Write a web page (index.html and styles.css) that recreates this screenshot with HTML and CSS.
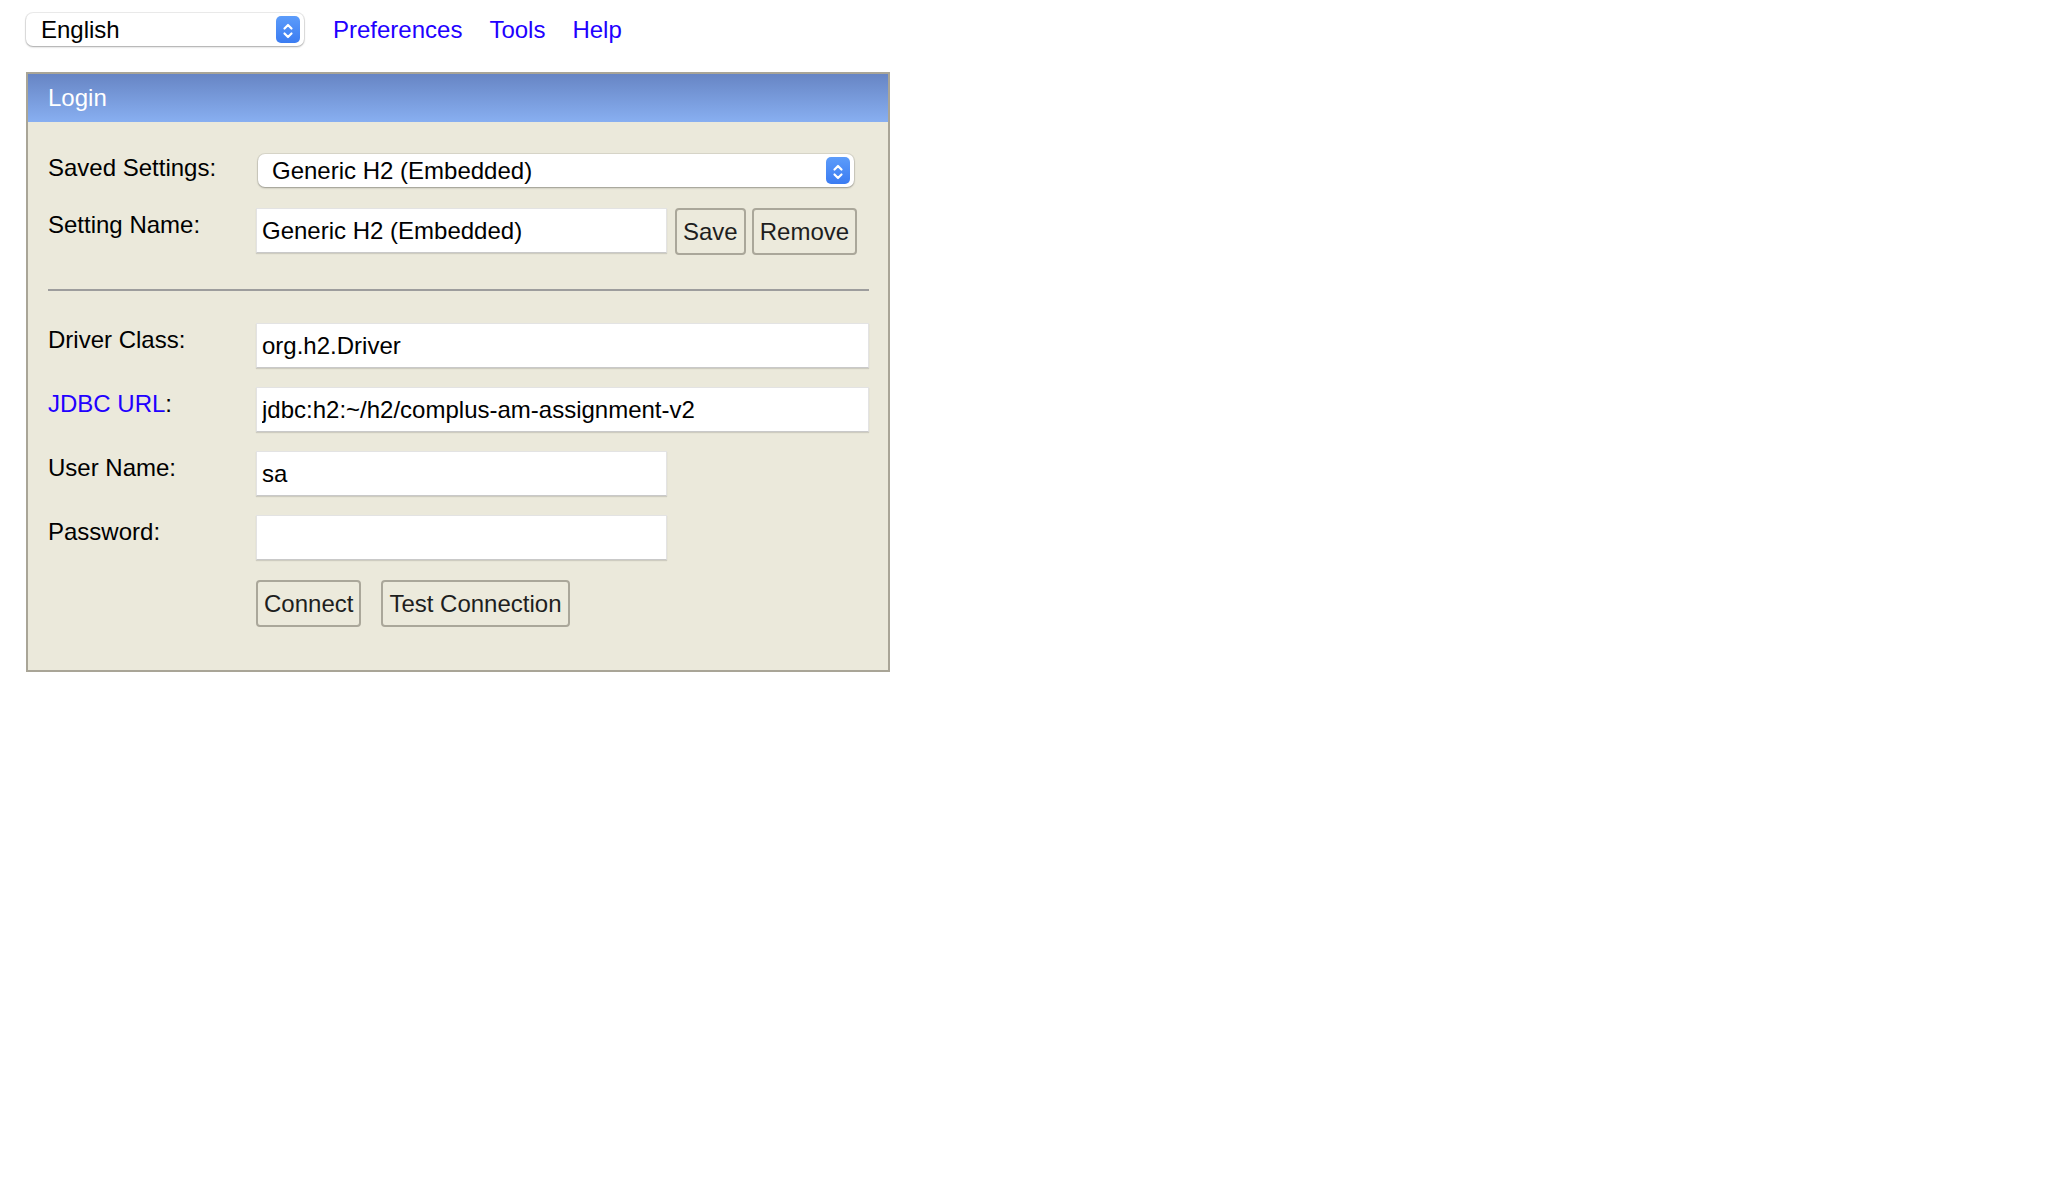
FILE: index.html
```html
<!DOCTYPE html>
<html lang="en">
<head>
  <meta charset="UTF-8" />
  <title>H2 Console</title>
  <link rel="stylesheet" href="styles.css">
</head>
<body>
  <div class="topbar">
    <div class="select lang">
      <span class="select-text">English</span>
      <svg class="stepper" width="24" height="27" viewBox="0 0 24 27">
        <defs>
          <linearGradient id="stepA" x1="0" y1="0" x2="0" y2="1">
            <stop offset="0" stop-color="#5c9cfa"/>
            <stop offset="1" stop-color="#3b7cf2"/>
          </linearGradient>
        </defs>
        <rect x="0" y="0" width="24" height="27" rx="5" fill="url(#stepA)"/>
        <path d="M8.5 12.5 L12 9 L15.5 12.5 M8.5 17.5 L12 21 L15.5 17.5" fill="none" stroke="#fff" stroke-width="2.2" stroke-linecap="round" stroke-linejoin="round"/>
      </svg>
    </div>
    <nav class="menu">
      <a href="#">Preferences</a>
      <a href="#">Tools</a>
      <a href="#">Help</a>
    </nav>
  </div>

  <div class="login">
    <div class="login-title">Login</div>
    <div class="login-body">
      <div class="row">
        <label class="label flush">Saved Settings:</label>
        <div class="select saved">
          <span class="select-text">Generic H2 (Embedded)</span>
          <svg class="stepper" width="24" height="27" viewBox="0 0 24 27">
            <defs>
              <linearGradient id="stepB" x1="0" y1="0" x2="0" y2="1">
                <stop offset="0" stop-color="#5c9cfa"/>
                <stop offset="1" stop-color="#3b7cf2"/>
              </linearGradient>
            </defs>
            <rect x="0" y="0" width="24" height="27" rx="5" fill="url(#stepB)"/>
            <path d="M8.5 12.5 L12 9 L15.5 12.5 M8.5 17.5 L12 21 L15.5 17.5" fill="none" stroke="#fff" stroke-width="2.2" stroke-linecap="round" stroke-linejoin="round"/>
          </svg>
        </div>
      </div>
      <div class="row name-row">
        <label class="label">Setting Name:</label>
        <div class="group">
          <input class="text short" type="text" value="Generic H2 (Embedded)">
          <button class="btn">Save</button>
          <button class="btn">Remove</button>
        </div>
      </div>

      <hr class="sep">

      <div class="row">
        <label class="label">Driver Class:</label>
        <input class="text long" type="text" value="org.h2.Driver">
      </div>
      <div class="row">
        <label class="label"><a href="#">JDBC URL</a>:</label>
        <input class="text long" type="text" value="jdbc:h2:~/h2/complus-am-assignment-v2">
      </div>
      <div class="row">
        <label class="label">User Name:</label>
        <input class="text short" type="text" value="sa">
      </div>
      <div class="row">
        <label class="label">Password:</label>
        <input class="text short" type="password" value="">
      </div>
      <div class="row actions">
        <button class="btn">Connect</button>
        <button class="btn">Test Connection</button>
      </div>
    </div>
  </div>
</body>
</html>
```

FILE: styles.css
```css
body { margin: 0; background: #fff; font-family: "Liberation Sans", Arial, sans-serif; font-size: 24px; line-height: 28px; color: #000; }
a { color: #2200ff; text-decoration: none; }

.topbar { display: flex; align-items: center; padding: 13px 0 0 26px; }
.menu { display: flex; gap: 27px; margin-left: 29px; }

.select { display: flex; align-items: center; justify-content: space-between; box-sizing: border-box; height: 33px; background: #fff; border-radius: 7px; box-shadow: 0 0 0 1px rgba(0,0,0,0.07), 0 1px 2px rgba(0,0,0,0.3); padding: 0 4px 0 15px; }
.select .select-text { white-space: nowrap; }
.select .stepper { display: block; flex: none; }
.select.lang { width: 278px; }
.select.saved { width: 596px; margin-left: 2px; padding-left: 14px; }

.login { box-sizing: border-box; width: 864px; margin: 26px 0 0 26px; border: 2px solid #a9a597; background: #ebe9db; }
.login-title { height: 48px; display: flex; align-items: center; padding-left: 20px; color: #fff; background: linear-gradient(#6785c4, #88aff1); }
.login-body { padding: 32px 19px 43px 20px; }

.row { display: flex; align-items: flex-start; margin-bottom: 19px; }
.row:first-child { margin-bottom: 21px; }
.label { flex: none; width: 208px; padding-top: 3px; }
.label.flush { padding-top: 0; }
.group { display: flex; align-items: flex-start; }

.text { box-sizing: border-box; height: 45px; margin: 0; padding: 0 5px; border: 1px solid #e3e3e3; border-bottom-color: #c9c9c9; box-shadow: 0 1px 1px rgba(0,0,0,0.12); background: #fff; font: inherit; color: #000; outline: none; }
.text.short { width: 411px; }
.text.long { flex: 1; }

.btn { box-sizing: border-box; height: 47px; margin: 0; padding: 0 6px; border: 2px solid #aaa79a; border-radius: 4px; background: #eceadc; font: inherit; color: #1e1e1e; }
.group .btn { margin-left: 6px; }
.group .btn:first-of-type { margin-left: 8px; }

.sep { height: 0; margin: 34px 0 32px; border: none; border-top: 2px solid #9d9d9d; }

.actions { margin: 20px 0 0 208px; gap: 20px; }
```
